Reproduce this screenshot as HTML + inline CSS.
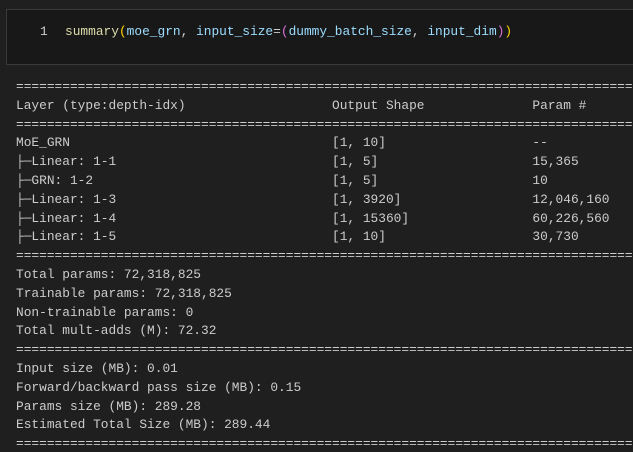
<!DOCTYPE html>
<html><head><style>
body{margin:0;width:633px;height:452px;background:#1f1f1f;overflow:hidden;font-family:"Liberation Mono",monospace;}
.wrap{position:absolute;left:0;top:0;width:633px;height:452px;overflow:hidden;}
.cell{position:absolute;left:6px;top:9px;width:627px;height:56px;background:#181818;border:1px solid #3a3a3a;border-right:none;box-sizing:border-box;}
.code{position:absolute;top:24px;font-size:12.85px;white-space:pre;color:#9cdcfe;}
.ln{position:absolute;left:40px;top:24px;font-size:12.85px;color:#cccccc;}
pre{position:absolute;left:16px;top:78px;width:617px;overflow:hidden;margin:0;font-family:"Liberation Mono",monospace;font-size:12.85px;line-height:18.8px;color:#cccccc;}
</style></head><body><div class="wrap">
<div class="cell"></div>
<div class="ln">1</div>
<div class="code" style="left:65px"><span style="color:#dcdcaa">summary</span><span style="color:#ffd700">(</span>moe_grn<span style="color:#ccc">, </span>input_size<span style="color:#ccc">=</span><span style="color:#da70d6">(</span>dummy_batch_size<span style="color:#ccc">, </span>input_dim<span style="color:#da70d6">)</span><span style="color:#ffd700">)</span></div>
<pre>================================================================================
Layer (type:depth-idx)                   Output Shape              Param #
================================================================================
MoE_GRN                                  [1, 10]                   --
├─Linear: 1-1                            [1, 5]                    15,365
├─GRN: 1-2                               [1, 5]                    10
├─Linear: 1-3                            [1, 3920]                 12,046,160
├─Linear: 1-4                            [1, 15360]                60,226,560
├─Linear: 1-5                            [1, 10]                   30,730
================================================================================
Total params: 72,318,825
Trainable params: 72,318,825
Non-trainable params: 0
Total mult-adds (M): 72.32
================================================================================
Input size (MB): 0.01
Forward/backward pass size (MB): 0.15
Params size (MB): 289.28
Estimated Total Size (MB): 289.44
================================================================================</pre>
</div></body></html>
